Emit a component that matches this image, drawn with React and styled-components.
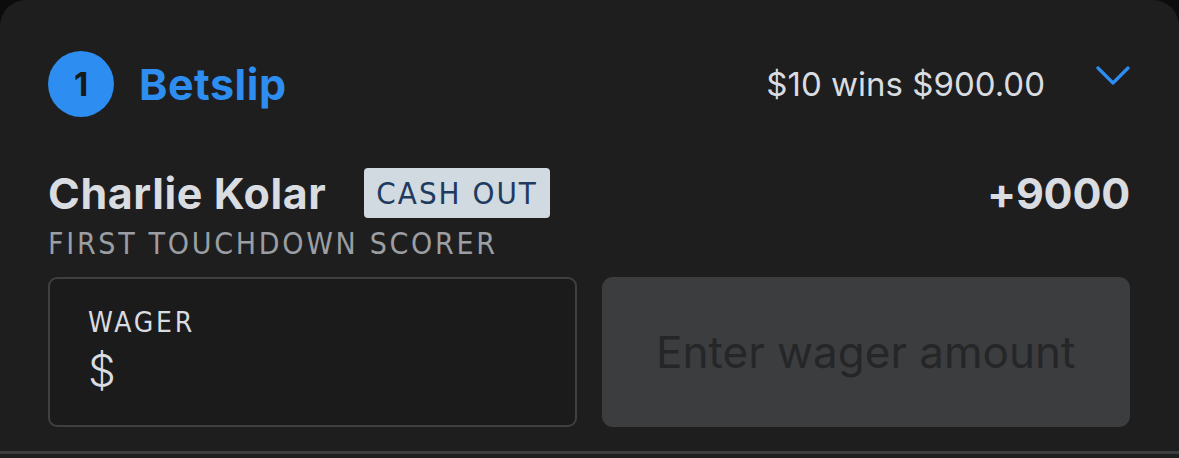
import React from "react";
import styled, { createGlobalStyle } from "styled-components";

const GlobalStyle = createGlobalStyle`
  html, body {
    margin: 0;
    padding: 0;
    background: #0c0c0d;
  }
  body {
    font-family: Inter, "Noto Sans", sans-serif;
  }
`;

const Card = styled.section`
  width: 1179px;
  height: 458px;
  box-sizing: border-box;
  background: #1e1e1f;
  border-radius: 26px 26px 0 0;
  padding: 51px 49px 0 48px;
  display: flex;
  flex-direction: column;
  overflow: hidden;
`;

const Header = styled.header`
  display: flex;
  align-items: center;
  height: 66px;
`;

const StepBadge = styled.div`
  width: 66px;
  height: 66px;
  border-radius: 50%;
  background: #2d8df0;
  color: #18191b;
  display: flex;
  align-items: center;
  justify-content: center;
  font-weight: 700;
  font-size: 33px;
`;

const Title = styled.h2`
  margin: 0 0 0 25px;
  color: #2d8df0;
  font-size: 43px;
  font-weight: 700;
  letter-spacing: 0.5px;
  flex: 1;
`;

const Summary = styled.span`
  color: #d9dce0;
  font-size: 33px;
  margin-right: 51px;
`;

const Chevron = styled.svg`
  width: 34px;
  height: 22px;
  margin-top: -16px;
`;

const SelectionRow = styled.div`
  display: flex;
  align-items: center;
  margin-top: 51px;
  height: 50px;
`;

const Player = styled.span`
  color: #d9dce0;
  font-size: 43px;
  font-weight: 700;
  letter-spacing: 0.6px;
`;

const Tag = styled.span`
  margin-left: 38px;
  background: #d1d9e1;
  color: #1e3a5f;
  border-radius: 4px;
  height: 50px;
  padding: 0 12px;
  display: flex;
  align-items: center;
  font-family: "Liberation Sans Narrow", "DejaVu Sans Condensed", Roboto, sans-serif;
  font-size: 31px;
  letter-spacing: 2px;
`;

const Odds = styled.span`
  margin-left: auto;
  color: #d9dce0;
  font-size: 43px;
  font-weight: 700;
  letter-spacing: -0.2px;
`;

const Market = styled.div`
  margin-top: 8px;
  color: #9b9fa3;
  font-family: "Liberation Sans Narrow", "DejaVu Sans Condensed", Roboto, sans-serif;
  font-size: 30px;
  letter-spacing: 2.7px;
  line-height: 36px;
`;

const InputRow = styled.div`
  display: grid;
  grid-template-columns: 1fr 1fr;
  gap: 25px;
  margin-top: 15px;
  height: 149px;
`;

const WagerBox = styled.label`
  box-sizing: border-box;
  border: 2px solid #3f4042;
  border-radius: 9px;
  background: #1b1b1c;
  padding: 28px 38px;
  display: flex;
  flex-direction: column;
`;

const WagerLabel = styled.span`
  color: #d9dce0;
  font-family: "Liberation Sans Narrow", "DejaVu Sans Condensed", Roboto, sans-serif;
  font-size: 28px;
  letter-spacing: 2.8px;
  line-height: 32px;
`;

const Currency = styled.span`
  margin-top: 4px;
  color: #d9dce0;
  font-size: 44px;
  font-weight: 300;
  line-height: 54px;
`;

const SubmitButton = styled.button`
  border: none;
  border-radius: 11px;
  background: #3c3d3f;
  color: #252628;
  font-family: Inter, "Noto Sans", sans-serif;
  font-size: 44px;
  cursor: not-allowed;
`;

const Divider = styled.hr`
  margin: 25px -49px 0 -48px;
  border: none;
  height: 3px;
  background: #3d3e40;
`;

export default function App() {
  return (
    <>
      <GlobalStyle />
      <Card>
        <Header>
          <StepBadge>1</StepBadge>
          <Title>Betslip</Title>
          <Summary>$10 wins $900.00</Summary>
          <Chevron viewBox="0 0 34 22" fill="none">
            <path d="M2 3 L17 18 L32 3" stroke="#2d8df0" strokeWidth="3.2" strokeLinecap="round" strokeLinejoin="round" />
          </Chevron>
        </Header>
        <SelectionRow>
          <Player>Charlie Kolar</Player>
          <Tag>CASH OUT</Tag>
          <Odds>+9000</Odds>
        </SelectionRow>
        <Market>FIRST TOUCHDOWN SCORER</Market>
        <InputRow>
          <WagerBox>
            <WagerLabel>WAGER</WagerLabel>
            <Currency>$</Currency>
          </WagerBox>
          <SubmitButton disabled>Enter wager amount</SubmitButton>
        </InputRow>
        <Divider />
      </Card>
    </>
  );
}
